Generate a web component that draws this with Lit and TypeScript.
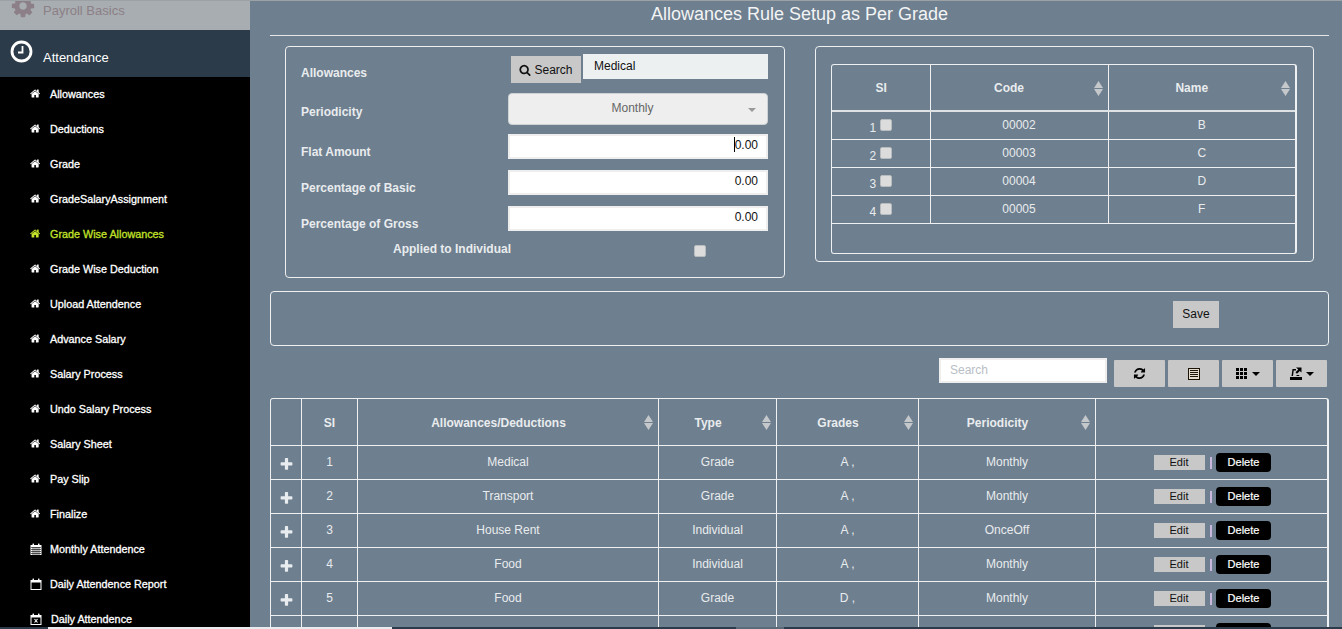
import { LitElement, html, css, svg } from 'lit';
import { customElement } from 'lit/decorators.js';

const HOME =
  'M1408 992v480q0 26-19 45t-45 19h-384v-384h-256v384h-384q-26 0-45-19t-19-45v-480q0-1 .5-3t.5-3l575-474 575 474q1 2 1 6zm223-69l-62 74q-8 9-21 11h-3q-13 0-21-7l-692-577-692 577q-12 8-24 7-13-2-21-11l-62-74q-8-10-7-23.5t11-21.5l719-599q32-26 76-26t76 26l244 204v-195q0-14 9-23t23-9h192q14 0 23 9t9 23v408l219 182q10 8 11 21.5t-7 23.5z';
const SEARCH =
  'M1216 832q0-185-131.5-316.5t-316.5-131.5-316.5 131.5-131.5 316.5 131.5 316.5 316.5 131.5 316.5-131.5 131.5-316.5zm512 832q0 52-38 90t-90 38q-54 0-90-38l-343-342q-179 124-399 124-143 0-273.5-55.5t-225-150-150-225-55.5-273.5 55.5-273.5 150-225 225-150 273.5-55.5 273.5 55.5 225 150 150 225 55.5 273.5q0 220-124 399l343 343q37 37 37 90z';
const REFRESH =
  'M1639 1056q0 5-1 7-64 268-268 434.5t-478 166.5q-146 0-282.5-55t-243.5-157l-129 129q-19 19-45 19t-45-19-19-45v-448q0-26 19-45t45-19h448q26 0 45 19t19 45-19 45l-137 137q71 66 161 102t187 36q134 0 250-65t186-179q11-17 53-117 8-23 30-23h192q13 0 22.5 9.5t9.5 22.5zm25-800v448q0 26-19 45t-45 19h-448q-26 0-45-19t-19-45 19-45l138-138q-148-137-349-137-134 0-250 65t-186 179q-11 17-53 117-8 23-30 23h-199q-13 0-22.5-9.5t-9.5-22.5v-7q65-268 270-434.5t480-166.5q146 0 284 55.5t245 156.5l130-129q19-19 45-19t45 19 19 45z';
const PLUS =
  'M1600 736v192q0 40-28 68t-68 28h-416v416q0 40-28 68t-68 28h-192q-40 0-68-28t-28-68v-416h-416q-40 0-68-28t-28-68v-192q0-40 28-68t68-28h416v-416q0-40 28-68t68-28h192q40 0 68 28t28 68v416h416q40 0 68 28t28 68z';
const COG =
  'M1152 896q0-106-75-181t-181-75-181 75-75 181 75 181 181 75 181-75 75-181zm512-109v222q0 12-8 23t-20 13l-185 28q-19 54-39 91 35 50 107 138 10 12 10 25t-9 23q-27 37-99 108t-94 71q-12 0-26-9l-138-108q-44 23-91 38-16 136-29 186-7 28-36 28h-222q-14 0-24.5-8.5t-11.5-21.5l-28-184q-49-16-90-37l-141 107q-10 9-25 9-14 0-25-11-126-114-165-168-7-10-7-23 0-12 8-23 15-21 51-66.5t54-70.5q-27-50-41-99l-183-27q-13-2-21-12.5t-8-23.5v-222q0-12 8-23t19-13l186-28q14-46 39-92-40-57-107-138-10-12-10-24 0-10 9-23 26-36 98.5-107.5t94.5-71.5q13 0 26 10l138 107q44-23 91-38 16-136 29-186 7-28 36-28h222q14 0 24.5 8.5t11.5 21.5l28 184q49 16 90 37l142-107q9-9 24-9 13 0 25 10 129 119 165 170 7 8 7 22 0 12-8 23-15 21-51 66.5t-54 70.5q26 50 41 98l183 28q13 2 21 12.5t8 23.5z';

const fa = (d: string, size: number) =>
  html`<svg class="fa" width=${size} height=${size} viewBox="0 0 1792 1792" fill="currentColor"><path d=${d}></path></svg>`;

const calMonth = html`<svg class="fa" width="12" height="12" viewBox="0 0 12 12" fill="currentColor">
  <path d="M0.5 2h11v10h-11z"></path>
  <rect x="2.5" y="0.5" width="1.5" height="3" rx=".5"></rect><rect x="8" y="0.5" width="1.5" height="3" rx=".5"></rect>
  <path stroke="#000" stroke-width=".6" d="M1 4.500h10M1 6.500h10M1 8.500h10M1 10.500h10M3 4v8M5 4v8M7 4v8M9 4v8"></path>
</svg>`;
const calEmpty = html`<svg class="fa" width="12" height="12" viewBox="0 0 12 12" fill="currentColor">
  <path d="M0.5 2h11v10h-11zM1.500 4.500v6.500h9v-6.500z" fill-rule="evenodd"></path>
  <rect x="2.5" y="0.5" width="1.5" height="3" rx=".5"></rect><rect x="8" y="0.5" width="1.5" height="3" rx=".5"></rect>
</svg>`;
const calX = html`<svg class="fa" width="12" height="12" viewBox="0 0 12 12" fill="currentColor">
  <path d="M0.5 2h11v10h-11zM1.500 4.500v6.500h9v-6.500z" fill-rule="evenodd"></path>
  <rect x="2.5" y="0.5" width="1.5" height="3" rx=".5"></rect><rect x="8" y="0.5" width="1.5" height="3" rx=".5"></rect>
  <path stroke="currentColor" stroke-width="1.100" d="M4.500 6l3 3.500M7.500 6l-3 3.500"></path>
</svg>`;

const thIcon = svg`<svg width="12" height="11" viewBox="0 0 12 11" fill="#000">
  <rect x="0" y="0" width="3" height="3"></rect><rect x="4" y="0" width="3" height="3"></rect><rect x="8" y="0" width="3" height="3"></rect>
  <rect x="0" y="4" width="3" height="3"></rect><rect x="4" y="4" width="3" height="3"></rect><rect x="8" y="4" width="3" height="3"></rect>
  <rect x="0" y="8" width="3" height="3"></rect><rect x="4" y="8" width="3" height="3"></rect><rect x="8" y="8" width="3" height="3"></rect>
</svg>`;
const listIcon = svg`<svg width="12" height="12" viewBox="0 0 12 12">
  <rect x=".5" y=".5" width="11" height="11" fill="#e2ddd0" stroke="#1c1405"></rect>
  <path stroke="#1c1405" d="M2 2.500h8M2 4.500h8M2 6.500h8M2 8.500h8"></path>
</svg>`;
const exportIcon = svg`<svg width="12" height="13" viewBox="0 0 12 13" fill="#000">
  <path d="M0 10h12v3h-12z"></path>
  <path d="M1.500 9l1-7h3.500v1.500h-2.300l-.7 5.500zM6 9l1-1h2l.5 1z"></path>
  <path d="M6 0.500h5.500v5l-1.700-1.500-2.800 2.800-1.500-1.500 2.800-2.800z"></path>
</svg>`;

const sortCaret = html`<svg class="sort" width="9" height="15" viewBox="0 0 9 15" fill="#c4c8cb">
  <path d="M4.500 0l4.500 7h-9zM0 8h9l-4.500 7z"></path>
</svg>`;

const NAV = [
  'Allowances', 'Deductions', 'Grade', 'GradeSalaryAssignment', 'Grade Wise Allowances',
  'Grade Wise Deduction', 'Upload Attendence', 'Advance Salary', 'Salary Process',
  'Undo Salary Process', 'Salary Sheet', 'Pay Slip', 'Finalize',
];

const GRADES = [
  ['1', '00002', 'B'],
  ['2', '00003', 'C'],
  ['3', '00004', 'D'],
  ['4', '00005', 'F'],
];

const RULES = [
  ['1', 'Medical', 'Grade', 'A ,', 'Monthly'],
  ['2', 'Transport', 'Grade', 'A ,', 'Monthly'],
  ['3', 'House Rent', 'Individual', 'A ,', 'OnceOff'],
  ['4', 'Food', 'Individual', 'A ,', 'Monthly'],
  ['5', 'Food', 'Grade', 'D ,', 'Monthly'],
  ['', '', '', '', ''],
];

@customElement('app-root')
export class AppRoot extends LitElement {
  static styles = css`
    :host {
      display: block;
      height: 629px;
      overflow: hidden;
      position: relative;
      font-family: 'Liberation Sans', Arial, sans-serif;
      font-size: 12px;
      color: #e9ecee;
    }
    .page {
      display: flex;
      height: 629px;
      background: #6e7f8f;
    }
    .fa {
      display: block;
      flex: none;
    }

    /* sidebar */
    .sidebar {
      width: 250px;
      flex: none;
      background: #000;
      overflow: hidden;
    }
    .parent {
      height: 30px;
      background: #a7adb0;
      border-top: 1px solid #9ca1a5;
      box-sizing: border-box;
      display: flex;
      align-items: flex-start;
      gap: 7px;
      padding-left: 10px;
      color: #8d7f87;
      font-size: 13px;
      overflow: hidden;
    }
    .parent svg {
      margin-top: -8px;
    }
    .parent span {
      margin-top: 2px;
    }
    .current {
      height: 47px;
      background: #2c3b49;
      display: flex;
      align-items: center;
      padding-left: 10px;
      color: #fff;
      font-size: 13px;
    }
    .current span {
      margin-left: 10px;
      padding-top: 8px;
    }
    .current svg {
      margin-top: -4px;
    }
    .nav {
      list-style: none;
      margin: -1px 0 0;
      padding: 0;
    }
    .nav li {
      height: 35px;
      display: flex;
      align-items: center;
      padding-left: 30px;
      gap: 9px;
      color: #fff;
      font-size: 10.8px;
      -webkit-text-stroke: 0.3px currentColor;
    }
    .nav li:last-child {
      gap: 10px;
    }
    .nav li.on {
      color: #c3e32a;
    }
    .nav li .ico {
      width: 11px;
      display: flex;
      justify-content: center;
    }

    /* main column */
    .main {
      flex: 1;
      min-width: 0;
      padding: 0 13px 0 20px;
      border-top: 1px solid #9ca1a5;
    }
    h1 {
      margin: 0;
      height: 34px;
      line-height: 26px;
      text-align: center;
      font-size: 18px;
      font-weight: normal;
      color: #f2f4f5;
      border-bottom: 1px solid #e4e6e7;
      box-sizing: content-box;
    }
    .panels {
      display: flex;
      align-items: flex-start;
      margin: 10px 15px 0 15px;
      gap: 30px;
    }
    .box {
      border: 1px solid #eef0f1;
      border-radius: 4px;
      box-sizing: border-box;
    }
    .form {
      width: 500px;
      height: 232px;
      padding: 7px 16px 0 15px;
    }
    .row {
      display: grid;
      grid-template-columns: 207px 260px;
      align-items: center;
      font-weight: bold;
    }
    .row label {
      color: #e9ecee;
      align-self: start;
    }
    .r-search { height: 29px; margin-bottom: 10px; }
    .r-search label { padding-top: 12px; }
    .r-period { height: 32px; margin-bottom: 8px; }
    .r-period label { padding-top: 12px; }
    .r-flat { height: 25px; margin-bottom: 11px; }
    .r-flat label { padding-top: 12px; }
    .r-basic { height: 25px; margin-bottom: 11px; }
    .r-basic label { padding-top: 12px; }
    .r-gross { height: 25px; margin-bottom: 11px; }
    .r-gross label { padding-top: 12px; }
    .r-applied {
      display: flex;
      align-items: flex-start;
    }
    .r-applied label {
      margin-left: 92px;
      padding-top: 1px;
    }
    .r-applied .check {
      margin: 4px 0 0 183px;
    }

    .lookup {
      display: flex;
      align-items: flex-start;
    }
    .search-btn {
      margin: 2px 2px 0 3px;
      width: 70px;
      height: 27px;
      background: #c8c8c8;
      display: flex;
      align-items: center;
      justify-content: center;
      gap: 3px;
      color: #111;
      font-weight: normal;
    }
    .lookup-value {
      flex: 1;
      height: 25px;
      line-height: 25px;
      padding-left: 11px;
      background: #ecf0f1;
      color: #111;
      font-weight: normal;
    }
    .select {
      height: 32px;
      box-sizing: border-box;
      border: 1px solid #cfd2d4;
      border-radius: 4px;
      background: #eee;
      color: #666;
      font-weight: normal;
      display: flex;
      align-items: center;
      justify-content: center;
      padding: 0 11px 3px 0;
      position: relative;
    }
    .select::after {
      content: '';
      position: absolute;
      right: 11px;
      top: 14px;
      border: 4px solid transparent;
      border-top-color: #999;
      border-bottom: 0;
    }
    .num {
      height: 25px;
      box-sizing: border-box;
      border: 2px solid #eee;
      background: #fff;
      color: #111;
      font-weight: normal;
      text-align: right;
      line-height: 19px;
      padding-right: 8px;
    }
    .caret {
      display: inline-block;
      width: 1px;
      height: 15px;
      background: #000;
      vertical-align: -3px;
    }
    .check {
      display: block;
      width: 12px;
      height: 12px;
      box-sizing: border-box;
      background: #dcdcdc;
      border: 1px solid #b9bcbe;
      border-radius: 2px;
    }

    .grades-box {
      width: 499px;
      height: 216px;
      padding: 17px 16px 0 15px;
    }
    .grades-frame {
      width: 466px;
      height: 190px;
      box-sizing: border-box;
      border: 1px solid #eef0f1;
      border-right-width: 2px;
      border-radius: 3px;
    }
    table {
      border-collapse: collapse;
      table-layout: fixed;
      width: 100%;
    }
    th, td {
      padding: 0;
      text-align: center;
      border: 1px solid #eef0f1;
      font-size: 12px;
      vertical-align: middle;
    }
    th {
      font-weight: bold;
      position: relative;
      padding-right: 20px;
    }
    th.plain {
      padding: 0 0 0 1px;
    }
    tr > :first-child { border-left: 0; }
    tr > :last-child { border-right: 0; }
    thead tr:first-child th { border-top: 0; }
    .sort {
      position: absolute;
      right: 5px;
      top: 50%;
      margin-top: -7px;
    }
    .grades th {
      height: 45px;
      border-bottom: 2px solid #dfe2e4;
    }
    .grades td {
      height: 26px;
      padding-bottom: 1px;
      font-weight: normal;
    }
    .grades td.si-cell {
      height: 24px;
      padding: 3px 0 0;
    }
    .si {
      display: inline-flex;
      align-items: flex-start;
      gap: 4px;
      height: 18px;
    }
    .si b {
      font-weight: normal;
      padding-top: 3px;
    }
    .si .check {
      margin-top: 1px;
    }

    .save-bar {
      margin-top: 13px;
      height: 55px;
      padding: 9px 0 0 902px;
    }
    .save-bar button {
      display: block;
      width: 46px;
      height: 27px;
      border: 0;
      padding: 0 0 2px;
      background: #c8c8c8;
      color: #111;
      font: 12px 'Liberation Sans', Arial, sans-serif;
    }

    .toolbar {
      display: flex;
      justify-content: flex-end;
      margin-top: 12px;
      padding-right: 2px;
      height: 29px;
      gap: 3px;
      align-items: flex-start;
    }
    .filter {
      width: 168px;
      height: 25px;
      box-sizing: border-box;
      border: 2px solid #eee;
      background: #fff;
      color: #b8bec5;
      line-height: 21px;
      padding-left: 9px;
      margin-right: 4px;
    }
    .tool {
      width: 51px;
      height: 27px;
      margin-top: 2px;
      background: #c8c8c8;
      border-radius: 1px;
      display: flex;
      align-items: center;
      justify-content: center;
      gap: 4px;
      color: #000;
    }
    .tool i {
      display: block;
      border: 4px solid transparent;
      border-top-color: #000;
      border-bottom: 0;
    }

    .rules-frame {
      margin-top: 11px;
      border: 1px solid #eef0f1;
      border-right-width: 2px;
      border-bottom: 0;
      border-radius: 3px 3px 0 0;
      box-sizing: border-box;
      width: 1059px;
    }
    .rules th {
      height: 45px;
      padding: 1px 18px 0 0;
    }
    .rules th.plain {
      padding: 1px 0 0 1px;
    }
    .rules td {
      height: 31px;
      padding: 0 0 2px 1px;
    }
    .rules td.plus {
      height: 22px;
      vertical-align: top;
      padding: 11px 0 0 1px;
    }
    .rules td.plus svg {
      margin: 0 auto;
    }
    .rules td.action-cell {
      padding: 0;
      height: 33px;
    }
    .actions {
      display: flex;
      align-items: center;
      padding-left: 58px;
    }
    .edit {
      width: 51px;
      height: 15px;
      line-height: 15px;
      background: #c8c8c8;
      color: #111;
      font-size: 11px;
    }
    .sep {
      width: 2px;
      height: 12px;
      margin: 0 4px 0 5px;
      background: #c9b7dd;
    }
    .delete {
      width: 55px;
      height: 19px;
      line-height: 19px;
      box-sizing: border-box;
      padding-left: 1px;
      border-radius: 4px;
      background: #000;
      color: #fff;
      font-size: 11px;
      -webkit-text-stroke: 0.2px #fff;
    }

    /* window scrollbar sliver at the bottom edge */
    .hscroll {
      position: absolute;
      left: 0;
      right: 0;
      bottom: 0;
      height: 2px;
      background: linear-gradient(
        90deg,
        #2c3b49 48px,
        #e9ecee 48px,
        #e9ecee 392px,
        #2c3b49 392px,
        #2c3b49 736px,
        #5b6b78 736px,
        #5b6b78 784px,
        #2c3b49 784px
      );
    }
  `;

  private navRow(label: string, icon: unknown, on = false) {
    return html`<li class=${on ? 'on' : ''}><span class="ico">${icon}</span>${label}</li>`;
  }

  render() {
    return html`
      <div class="page">
        <aside class="sidebar">
          <div class="parent">${fa(COG, 26)}<span>Payroll Basics</span></div>
          <div class="current">
            <svg class="fa" width="23" height="23" viewBox="0 0 23 23" fill="none" stroke="#fff">
              <circle cx="11.500" cy="11.500" r="9.500" stroke-width="2.800"></circle>
              <path d="M12.500 6v6.500h-4.500" stroke-width="1.800"></path>
            </svg>
            <span>Attendance</span>
          </div>
          <ul class="nav">
            ${NAV.map((n) => this.navRow(n, fa(HOME, 11), n === 'Grade Wise Allowances'))}
            ${this.navRow('Monthly Attendence', calMonth)}
            ${this.navRow('Daily Attendence Report', calEmpty)}
            ${this.navRow('Daily Attendence', calX)}
          </ul>
        </aside>

        <main class="main">
          <h1>Allowances Rule Setup as Per Grade</h1>

          <div class="panels">
            <section class="box form">
              <div class="row r-search">
                <label>Allowances</label>
                <div class="lookup">
                  <span class="search-btn">${fa(SEARCH, 12)}Search</span>
                  <span class="lookup-value">Medical</span>
                </div>
              </div>
              <div class="row r-period">
                <label>Periodicity</label>
                <div class="select">Monthly</div>
              </div>
              <div class="row r-flat">
                <label>Flat Amount</label>
                <div class="num"><span class="caret"></span>0.00</div>
              </div>
              <div class="row r-basic">
                <label>Percentage of Basic</label>
                <div class="num">0.00</div>
              </div>
              <div class="row r-gross">
                <label>Percentage of Gross</label>
                <div class="num">0.00</div>
              </div>
              <div class="row r-applied">
                <label>Applied to Individual</label>
                <span class="check"></span>
              </div>
            </section>

            <section class="box grades-box">
              <div class="grades-frame">
                <table class="grades">
                  <colgroup><col style="width:98px" /><col style="width:178px" /><col /></colgroup>
                  <thead>
                    <tr><th class="plain">SI</th><th>Code${sortCaret}</th><th>Name${sortCaret}</th></tr>
                  </thead>
                  <tbody>
                    ${GRADES.map(
                      (g) => html`<tr>
                        <td class="si-cell"><span class="si"><b>${g[0]}</b><span class="check"></span></span></td>
                        <td>${g[1]}</td>
                        <td>${g[2]}</td>
                      </tr>`,
                    )}
                  </tbody>
                </table>
              </div>
            </section>
          </div>

          <section class="box save-bar"><button>Save</button></section>

          <div class="toolbar">
            <div class="filter">Search</div>
            <span class="tool">${fa(REFRESH, 13)}</span>
            <span class="tool">${listIcon}</span>
            <span class="tool">${thIcon}<i></i></span>
            <span class="tool">${exportIcon}<i></i></span>
          </div>

          <div class="rules-frame">
            <table class="rules">
              <colgroup>
                <col style="width:30px" /><col style="width:56px" /><col style="width:301px" />
                <col style="width:118px" /><col style="width:142px" /><col style="width:177px" /><col />
              </colgroup>
              <thead>
                <tr>
                  <th class="plain"></th>
                  <th class="plain">SI</th>
                  <th>Allowances/Deductions${sortCaret}</th>
                  <th>Type${sortCaret}</th>
                  <th>Grades${sortCaret}</th>
                  <th>Periodicity${sortCaret}</th>
                  <th class="plain"></th>
                </tr>
              </thead>
              <tbody>
                ${RULES.map(
                  (r) => html`<tr>
                    <td class="plus">${fa(PLUS, 15)}</td>
                    <td>${r[0]}</td>
                    <td>${r[1]}</td>
                    <td>${r[2]}</td>
                    <td>${r[3]}</td>
                    <td>${r[4]}</td>
                    <td class="action-cell">
                      <div class="actions">
                        <span class="edit">Edit</span><span class="sep"></span><span class="delete">Delete</span>
                      </div>
                    </td>
                  </tr>`,
                )}
              </tbody>
            </table>
          </div>
        </main>
      </div>
      <div class="hscroll"></div>
    `;
  }
}
